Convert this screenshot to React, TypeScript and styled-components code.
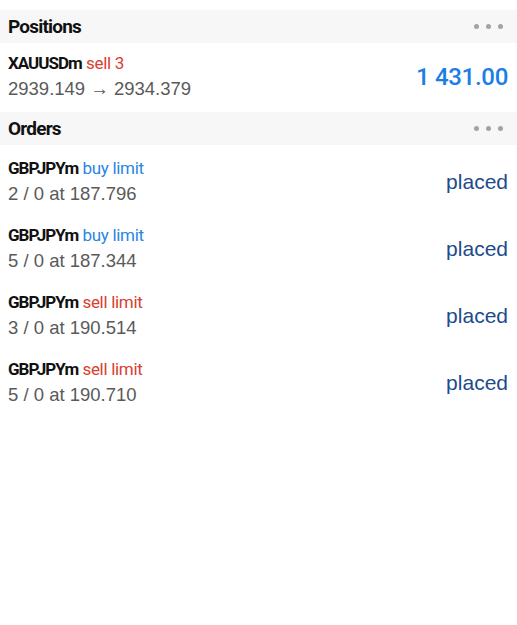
import React from "react";
import styled, { createGlobalStyle } from "styled-components";

const Global = createGlobalStyle`
  html, body { margin: 0; padding: 0; background: #ffffff; }
  body { font-family: "Liberation Sans", Arial, sans-serif; -webkit-font-smoothing: antialiased; }
`;

const condensed = `Roboto, "Liberation Sans", sans-serif`;

const Page = styled.div`
  display: flex;
  flex-direction: column;
  padding-top: 10px;
  width: 517px;
`;

const SectionHeader = styled.div`
  height: 33px;
  background: #f7f7f7;
  display: flex;
  align-items: center;
  justify-content: space-between;
  padding: 0 14px 0 8px;
`;

const SectionTitle = styled.div`
  font-family: ${condensed};
  font-weight: 700;
  font-size: 19px;
  color: #111;
  letter-spacing: -0.8px;
`;

const Dots = styled.div`
  display: flex;
  gap: 7px;
`;

const Dot = styled.span`
  width: 5px;
  height: 5px;
  border-radius: 50%;
  background: #a3a3a3;
`;

const Row = styled.div<{ $h: number; $top: number }>`
  height: ${(p) => p.$h}px;
  box-sizing: border-box;
  padding: ${(p) => p.$top}px 9px 0 8px;
`;

const RowInner = styled.div`
  display: flex;
  align-items: center;
  justify-content: space-between;
`;

const Info = styled.div`
  display: flex;
  flex-direction: column;
`;

const Title = styled.div`
  font-family: ${condensed};
  font-size: 17px;
  line-height: 25px;
  color: #111;
  white-space: nowrap;
`;

const Symbol = styled.span`
  font-weight: 700;
  letter-spacing: -1px;
`;

const Side = styled.span<{ $kind: "buy" | "sell" }>`
  color: ${(p) => (p.$kind === "buy" ? "#2a86e2" : "#d8402f")};
  letter-spacing: -0.3px;
`;

const Sub = styled.div`
  font-family: "Liberation Sans", Arial, sans-serif;
  font-size: 18.5px;
  line-height: 26px;
  color: #5a5a5a;
  white-space: nowrap;
`;

const Profit = styled.div`
  font-family: Roboto, "Liberation Sans", sans-serif;
  font-weight: 500;
  font-size: 24px;
  color: #1a7ee8;
  letter-spacing: -0.3px;
`;

const Status = styled.div`
  font-family: "Liberation Sans", Arial, sans-serif;
  font-size: 21px;
  color: #1c4c8c;
`;

const MoreDots = () => (
  <Dots>
    <Dot />
    <Dot />
    <Dot />
  </Dots>
);

const orders = [
  { kind: "buy" as const, label: "buy limit", detail: "2 / 0 at 187.796" },
  { kind: "buy" as const, label: "buy limit", detail: "5 / 0 at 187.344" },
  { kind: "sell" as const, label: "sell limit", detail: "3 / 0 at 190.514" },
  { kind: "sell" as const, label: "sell limit", detail: "5 / 0 at 190.710" },
];

export default function App() {
  return (
    <Page>
      <Global />
      <SectionHeader>
        <SectionTitle>Positions</SectionTitle>
        <MoreDots />
      </SectionHeader>
      <Row $h={69} $top={8}>
        <RowInner>
          <Info>
            <Title>
              <Symbol>XAUUSDm</Symbol> <Side $kind="sell">sell 3</Side>
            </Title>
            <Sub>2939.149 → 2934.379</Sub>
          </Info>
          <Profit>1 431.00</Profit>
        </RowInner>
      </Row>
      <SectionHeader>
        <SectionTitle>Orders</SectionTitle>
        <MoreDots />
      </SectionHeader>
      {orders.map((o, i) => (
        <Row key={i} $h={67} $top={11}>
          <RowInner>
            <Info>
              <Title>
                <Symbol>GBPJPYm</Symbol> <Side $kind={o.kind}>{o.label}</Side>
              </Title>
              <Sub>{o.detail}</Sub>
            </Info>
            <Status>placed</Status>
          </RowInner>
        </Row>
      ))}
    </Page>
  );
}
